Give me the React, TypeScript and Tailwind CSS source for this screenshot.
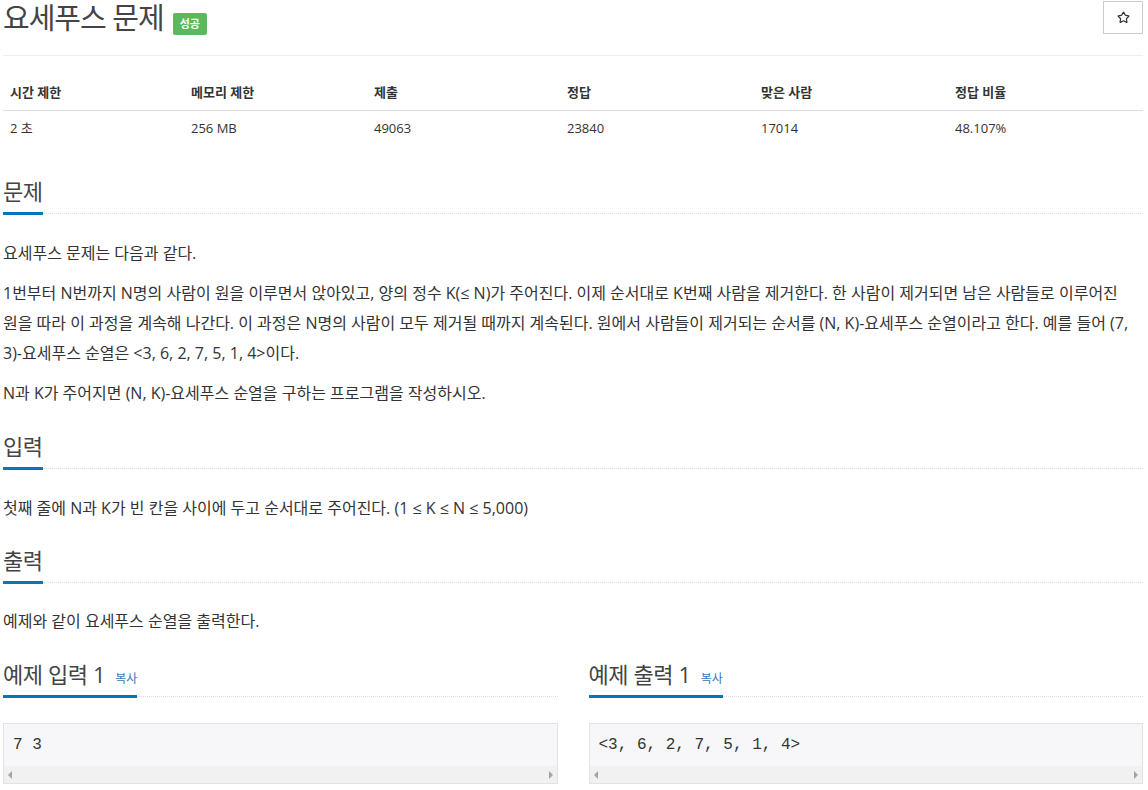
import { Star } from 'lucide-react';

const STATS = [
  { label: '시간 제한', value: '2 초' },
  { label: '메모리 제한', value: '256 MB' },
  { label: '제출', value: '49063' },
  { label: '정답', value: '23840' },
  { label: '맞은 사람', value: '17014' },
  { label: '정답 비율', value: '48.107%' },
];

function Headline({ title, copy }: { title: string; copy?: boolean }) {
  return (
    <div className="flex items-end">
      <h2 className="flex h-[40px] items-baseline whitespace-nowrap border-b-[3px] border-[#0076c0] pt-[2px] text-[22px] leading-[28px] tracking-[-0.4px] text-[#444]">
        {title}
        {copy && <span className="ml-[10px] text-[12px] leading-none tracking-normal text-[#337ab7]">복사</span>}
      </h2>
      <div className="mb-[1px] flex-1 border-b border-dotted border-[#ddd]" />
    </div>
  );
}

function Sample({ title, text }: { title: string; text: string }) {
  return (
    <div className="flex flex-col">
      <Headline title={title} copy />
      <div className="mt-[25px] border border-[#e1e1e8] bg-[#f7f7f9]">
        <pre className="px-[9px] pt-[10px] pb-[10px] font-['Liberation_Mono',monospace] text-[16px] leading-[22px] text-[#333]">
          {text}
        </pre>
        <div className="flex h-[17px] items-center justify-between bg-[#f1f1f1] px-[4px]">
          <span className="h-0 w-0 border-y-[4px] border-r-[4px] border-y-transparent border-r-[#a3a3a3]" />
          <span className="h-0 w-0 border-y-[4px] border-l-[4px] border-y-transparent border-l-[#a3a3a3]" />
        </div>
      </div>
    </div>
  );
}

export default function App() {
  return (
    <div className="min-h-screen bg-white font-['Open_Sans','Noto_Sans_CJK_KR',sans-serif] text-[#333]">
      <div className="ml-[3px] w-[1140px]">
        {/* title */}
        <div className="flex h-[56px] items-start justify-between border-b border-[#eee]">
          <div className="flex items-start">
            <h1 className="text-[29px] leading-[36px] tracking-[-1px] text-[#444]">요세푸스 문제</h1>
            <span className="ml-[9px] mt-[13px] rounded-[2px] bg-[#5cb85c] px-[7px] py-[3px] text-[11px] font-bold leading-[16px] text-white">
              성공
            </span>
          </div>
          <button className="mt-[1px] flex h-[33px] w-[40px] items-center justify-center border border-[#ccc] bg-white">
            <Star size={13} strokeWidth={2.2} color="#333" />
          </button>
        </div>

        {/* stats table */}
        <div className="mt-[19px] text-[13px]">
          <div className="grid h-[36px] grid-cols-[181px_183px_193px_194px_194px_1fr] items-center border-b border-[#ddd] font-bold">
            {STATS.map((s) => (
              <div key={s.label} className="px-[7px]">{s.label}</div>
            ))}
          </div>
          <div className="grid h-[36px] grid-cols-[181px_183px_193px_194px_194px_1fr] items-center">
            {STATS.map((s) => (
              <div key={s.label} className="px-[7px]">{s.value}</div>
            ))}
          </div>
        </div>

        {/* 문제 */}
        <section className="mt-[28px]">
          <Headline title="문제" />
          <div className="mt-[23px] flex flex-col gap-[10px] text-[16px] leading-[30px]">
            <p>요세푸스 문제는 다음과 같다.</p>
            <p>
              1번부터 N번까지 N명의 사람이 원을 이루면서 앉아있고, 양의 정수 K(≤ N)가 주어진다. 이제 순서대로 K번째 사람을 제거한다. 한 사람이 제거되면 남은 사람들로 이루어진
              <br />
              원을 따라 이 과정을 계속해 나간다. 이 과정은 N명의 사람이 모두 제거될 때까지 계속된다. 원에서 사람들이 제거되는 순서를 (N, K)-요세푸스 순열이라고 한다. 예를 들어 (7,
              <br />
              3)-요세푸스 순열은 &lt;3, 6, 2, 7, 5, 1, 4&gt;이다.
            </p>
            <p>N과 K가 주어지면 (N, K)-요세푸스 순열을 구하는 프로그램을 작성하시오.</p>
          </div>
        </section>

        {/* 입력 */}
        <section className="mt-[22px]">
          <Headline title="입력" />
          <div className="mt-[23px] text-[16px] leading-[30px]">
            <p>첫째 줄에 N과 K가 빈 칸을 사이에 두고 순서대로 주어진다. (1 ≤ K ≤ N ≤ 5,000)</p>
          </div>
        </section>

        {/* 출력 */}
        <section className="mt-[21px]">
          <Headline title="출력" />
          <div className="mt-[22px] text-[16px] leading-[30px]">
            <p>예제와 같이 요세푸스 순열을 출력한다.</p>
          </div>
        </section>

        {/* 예제 */}
        <div className="mt-[22px] grid grid-cols-2 gap-[31px]">
          <Sample title="예제 입력 1" text="7 3" />
          <Sample title="예제 출력 1" text="<3, 6, 2, 7, 5, 1, 4>" />
        </div>
      </div>
    </div>
  );
}
